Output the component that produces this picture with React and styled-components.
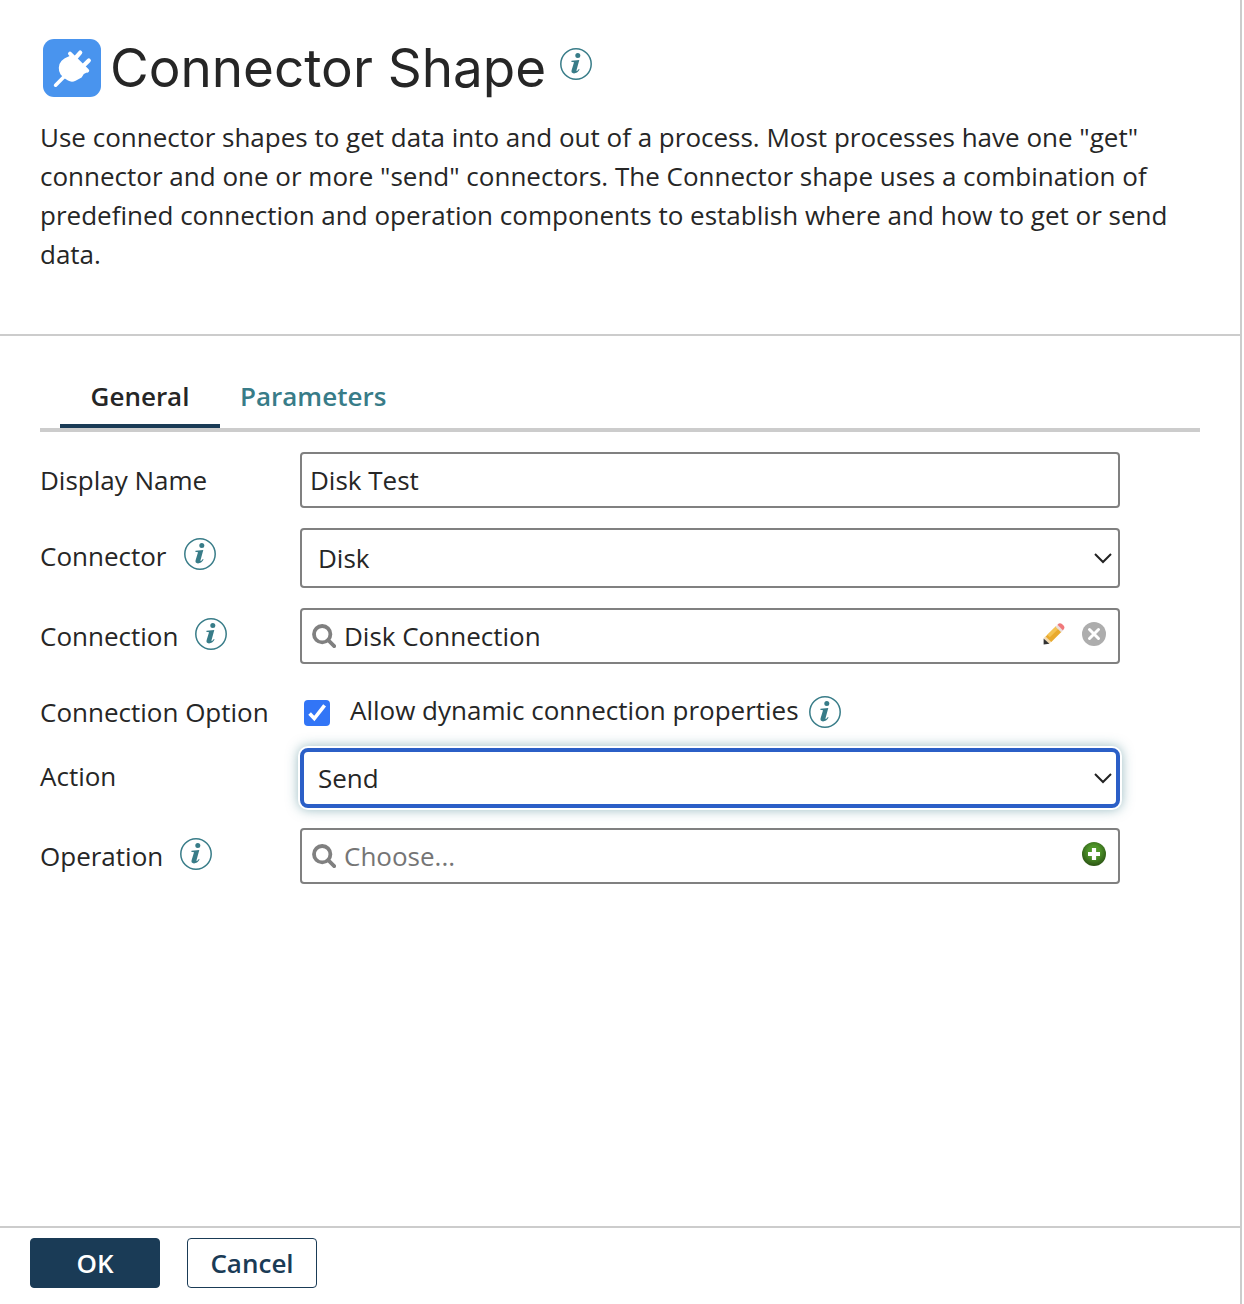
import React, { useState } from "react";
import styled, { createGlobalStyle, css } from "styled-components";

const ink = "#262626";
const navy = "#1a3b56";
const teal = "#387c88";
const rule = "#cccccc";

const GlobalStyle = createGlobalStyle`
  *, *::before, *::after { box-sizing: border-box; }
  body { margin: 0; background: #fff; }
  body, button, input, select {
    font-family: "Open Sans", "Noto Sans", sans-serif;
    font-size: 26px;
    color: ${ink};
  }
`;

const Panel = styled.main`
  display: flex;
  flex-direction: column;
  min-height: 100vh;
  margin-right: 2px;
  border-right: 2px solid ${rule};
`;

const Header = styled.header`
  padding: 28px 40px 60px;
  border-bottom: 2px solid ${rule};
`;

const TitleRow = styled.div`
  display: flex;
  align-items: center;
  height: 80px;
  padding-left: 2px;
  margin-bottom: 10px;
`;

const Title = styled.h1`
  margin: 0 14px 0 8px;
  font-family: Inter, "Open Sans", sans-serif;
  font-size: 53px;
  font-weight: 400;
  line-height: 80px;
  white-space: nowrap;
`;

const Description = styled.p`
  margin: 0;
  line-height: 39px;
`;

const Body = styled.section`
  flex: 1;
  padding: 28px 40px 20px;
`;

const TabList = styled.div`
  display: flex;
  padding-left: 20px;
  border-bottom: 4px solid ${rule};
  margin-bottom: 20px;
`;

const Tab = styled.button`
  height: 64px;
  min-width: 160px;
  padding: 4px 20px 0;
  background: none;
  border: 0;
  border-bottom: 4px solid ${(p) => (p.$active ? navy : "transparent")};
  color: ${(p) => (p.$active ? ink : teal)};
  font-weight: 600;
  cursor: pointer;
`;

const Form = styled.div`
  display: flex;
  flex-direction: column;
  gap: 20px;
`;

const Row = styled.div`
  display: grid;
  grid-template-columns: 260px minmax(0, 1fr);
  align-items: start;
  padding-right: 80px;
`;

const LabelCell = styled.div`
  display: flex;
  align-items: center;
  gap: 17px;
  height: 56px;
  white-space: nowrap;
`;

const InfoButton = styled.button`
  display: inline-flex;
  flex: none;
  padding: 0;
  margin-bottom: ${(p) => p.$lift || 0}px;
  border: 0;
  background: none;
  cursor: pointer;
`;

const fieldBox = css`
  width: 100%;
  border: 2px solid #808080;
  border-radius: 4px;
  background: #fff;
`;

const TextInput = styled.input`
  ${fieldBox}
  height: 56px;
  padding: 0 8px;
  outline: none;
`;

const SelectWrap = styled.div`
  display: grid;
  align-items: center;
  & > * { grid-area: 1 / 1; }
  & > svg {
    justify-self: end;
    margin-right: 7px;
    pointer-events: none;
  }
`;

const Select = styled.select`
  ${fieldBox}
  appearance: none;
  height: 60px;
  padding: 0 40px 0 16px;
  outline: none;
  ${(p) =>
    p.$highlighted &&
    css`
      padding-left: 14px;
      border: 4px solid #2b5fc7;
      border-radius: 8px;
      box-shadow: 0 0 0 2px #fff, 0 0 12px 2px rgba(56, 124, 136, 0.5);
    `}
`;

const Picker = styled.div`
  ${fieldBox}
  display: flex;
  align-items: center;
  height: 56px;
  padding: 0 12px 0 10px;
`;

const PickerInput = styled.input`
  flex: 1;
  min-width: 0;
  height: 52px;
  padding: 0 0 0 8px;
  border: 0;
  outline: none;
  background: none;
  &::placeholder { color: #757575; opacity: 1; }
`;

const IconButton = styled.button`
  display: flex;
  padding: 0;
  margin: 0 0 4px 16px;
  border: 0;
  background: none;
  cursor: pointer;
`;

const OptionTitle = styled.span`
  padding-top: 12px;
  line-height: 32px;
`;

const OptionCell = styled.div`
  display: flex;
  align-items: center;
  height: 44px;
  padding: 12px 0 0 4px;
`;

const OptionLabel = styled.label`
  margin: 0 10px 0 20px;
  line-height: 32px;
  padding-bottom: 4px;
`;

const CheckWrap = styled.span`
  display: grid;
  margin-top: 2px;
  & > * { grid-area: 1 / 1; }
  & > svg { pointer-events: none; }
`;

const Checkbox = styled.input`
  appearance: none;
  width: 26px;
  height: 26px;
  margin: 0;
  border: 2px solid #767676;
  border-radius: 4px;
  &:checked { border: 0; background: #3275f6; }
`;

const Footer = styled.footer`
  display: flex;
  gap: 27px;
  padding: 10px 30px 16px;
  border-top: 2px solid ${rule};
`;

const ActionButton = styled.button`
  width: 130px;
  height: 50px;
  padding: 0;
  border: 1px solid ${navy};
  border-radius: 4px;
  background: ${(p) => (p.$primary ? navy : "#fff")};
  color: ${(p) => (p.$primary ? "#fff" : navy)};
  font-weight: 600;
  cursor: pointer;
`;

const PlugLogo = () => (
  <svg width="60" height="60" viewBox="0 0 60 60" aria-hidden="true">
    <rect x="1" y="1" width="58" height="58" rx="11" fill="#4994ee" />
    <g stroke="#fff" strokeLinecap="round" fill="none">
      <path d="M13.6 47.2 23 37.8" strokeWidth="3.6" />
      <path d="M33 20.5 38.2 14.6M41 28.2 46.8 22.4" strokeWidth="4.2" />
      <path d="M28 15.6 45.2 32.6" strokeWidth="4" />
    </g>
    <path
      d="M28.6 14.6 46.3 32.4 44.3 34.8 41.8 36 39.6 39.4 33.6 42.8Q29.6 44.6 26 42.6L22 40 18.6 36.4Q16.6 33.5 16.8 29.8 17 25.5 19.6 22.8L22.8 20.2 27.6 18Z"
      fill="#fff"
    />
  </svg>
);

const Info = ({ topic, lift }) => (
  <InfoButton type="button" aria-label={`About ${topic}`} $lift={lift}>
    <svg width="32" height="32" viewBox="0 0 32 32" aria-hidden="true">
      <circle cx="16" cy="16" r="15.2" fill="none" stroke={teal} strokeWidth="1.5" />
      <circle cx="17.8" cy="7.6" r="2.5" fill={teal} />
      <path
        d="M11.5 12.8 19.3 12 16.5 22.2C16.3 23 16.8 23.2 17.3 22.7L18.9 21 19.6 21.6C18 24.2 16.2 25.4 14 25.4 11.9 25.4 11.1 24 11.6 22.3L13.8 15C14 14.2 13.8 14 13 14L11.4 14.1Z"
        fill={teal}
      />
    </svg>
  </InfoButton>
);

const Chevron = () => (
  <svg width="20" height="14" viewBox="0 0 20 14" aria-hidden="true">
    <path d="M2 3 10 11 18 3" fill="none" stroke="#222" strokeWidth="2" />
  </svg>
);

const SearchIcon = () => (
  <svg width="24" height="24" viewBox="0 0 24 24" aria-hidden="true">
    <circle cx="10.2" cy="10.2" r="8.2" fill="none" stroke="#808080" strokeWidth="3.8" />
    <path d="M16.2 16.2 22.2 22.2" stroke="#808080" strokeWidth="3.8" strokeLinecap="round" />
  </svg>
);

const PencilIcon = () => (
  <svg width="24" height="24" viewBox="0 0 24 24" aria-hidden="true">
    <path d="M1.7 16 4 14 9.5 19.5 7 22Z" fill="#f3d9ad" />
    <path d="M1.6 16.4 7.4 21.8 1.6 22.4Z" fill="#333" />
    <path d="M3.6 14.5 14 4.2 19.6 9.8 9.3 20Z" fill="#e9aa2e" />
    <path d="M5.4 12.7 14 4.2 16.5 6.7 7.8 15.2Z" fill="#f4c352" />
    <path d="M13.5 4.7 15.8 2.5 21.5 8.1 19.2 10.3Z" fill="#eadfdc" />
    <path d="M15.5 2.8 16.8 1.6Q18.2.7 20 2L22 4Q23 5.7 22 7L20.8 8.3Z" fill="#f0787a" />
  </svg>
);

const ClearIcon = () => (
  <svg width="24" height="24" viewBox="0 0 24 24" aria-hidden="true">
    <circle cx="12" cy="12" r="12" fill="#adadad" />
    <path d="M7.5 7.5 16.5 16.5M16.5 7.5 7.5 16.5" stroke="#fff" strokeWidth="3" strokeLinecap="round" />
  </svg>
);

const AddIcon = () => (
  <svg width="24" height="24" viewBox="0 0 24 24" aria-hidden="true">
    <defs>
      <radialGradient id="addFill" cx="50%" cy="40%" r="60%">
        <stop offset="0.4" stopColor="#4f962a" />
        <stop offset="1" stopColor="#2b5414" />
      </radialGradient>
    </defs>
    <circle cx="12" cy="12" r="12" fill="url(#addFill)" />
    <path d="M12 6V18M6 12H18" stroke="#fff" strokeWidth="4.2" />
  </svg>
);

const CheckMark = () => (
  <svg width="26" height="26" viewBox="0 0 26 26" aria-hidden="true">
    <path d="M5.6 13.6 10.3 18.6 20.6 5.4" fill="none" stroke="#fff" strokeWidth="3.6" />
  </svg>
);

function FieldRow({ id, label, info, children }) {
  return (
    <Row>
      <LabelCell>
        <label htmlFor={id}>{label}</label>
        {info && <Info topic={label} lift={4} />}
      </LabelCell>
      {children}
    </Row>
  );
}

export default function App() {
  const [tab, setTab] = useState("General");
  const [dynamic, setDynamic] = useState(true);

  return (
    <>
      <GlobalStyle />
      <Panel>
        <Header>
          <TitleRow>
            <PlugLogo />
            <Title>Connector Shape</Title>
            <Info topic="Connector Shape" lift={8} />
          </TitleRow>
          <Description>
            Use connector shapes to get data into and out of a process. Most processes have one "get"
            connector and one or more "send" connectors. The Connector shape uses a combination of
            predefined connection and operation components to establish where and how to get or send
            data.
          </Description>
        </Header>
        <Body>
          <TabList role="tablist">
            {["General", "Parameters"].map((name) => (
              <Tab
                key={name}
                type="button"
                role="tab"
                aria-selected={tab === name}
                $active={tab === name}
                onClick={() => setTab(name)}
              >
                {name}
              </Tab>
            ))}
          </TabList>
          <Form>
            <FieldRow id="displayName" label="Display Name">
              <TextInput id="displayName" type="text" defaultValue="Disk Test" />
            </FieldRow>
            <FieldRow id="connector" label="Connector" info>
              <SelectWrap>
                <Select id="connector" defaultValue="Disk">
                  <option>Disk</option>
                </Select>
                <Chevron />
              </SelectWrap>
            </FieldRow>
            <FieldRow id="connection" label="Connection" info>
              <Picker>
                <SearchIcon />
                <PickerInput id="connection" type="text" defaultValue="Disk Connection" />
                <IconButton type="button" aria-label="Edit connection">
                  <PencilIcon />
                </IconButton>
                <IconButton type="button" aria-label="Clear connection">
                  <ClearIcon />
                </IconButton>
              </Picker>
            </FieldRow>
            <Row>
              <OptionTitle>Connection Option</OptionTitle>
              <OptionCell>
                <CheckWrap>
                  <Checkbox
                    id="dynamic"
                    type="checkbox"
                    checked={dynamic}
                    onChange={(e) => setDynamic(e.target.checked)}
                  />
                  {dynamic && <CheckMark />}
                </CheckWrap>
                <OptionLabel htmlFor="dynamic">Allow dynamic connection properties</OptionLabel>
                <Info topic="dynamic connection properties" />
              </OptionCell>
            </Row>
            <FieldRow id="action" label="Action">
              <SelectWrap>
                <Select id="action" defaultValue="Send" $highlighted>
                  <option>Send</option>
                </Select>
                <Chevron />
              </SelectWrap>
            </FieldRow>
            <FieldRow id="operation" label="Operation" info>
              <Picker>
                <SearchIcon />
                <PickerInput id="operation" type="text" placeholder="Choose..." />
                <IconButton type="button" aria-label="Add operation">
                  <AddIcon />
                </IconButton>
              </Picker>
            </FieldRow>
          </Form>
        </Body>
        <Footer>
          <ActionButton type="button" $primary>
            OK
          </ActionButton>
          <ActionButton type="button">Cancel</ActionButton>
        </Footer>
      </Panel>
    </>
  );
}
